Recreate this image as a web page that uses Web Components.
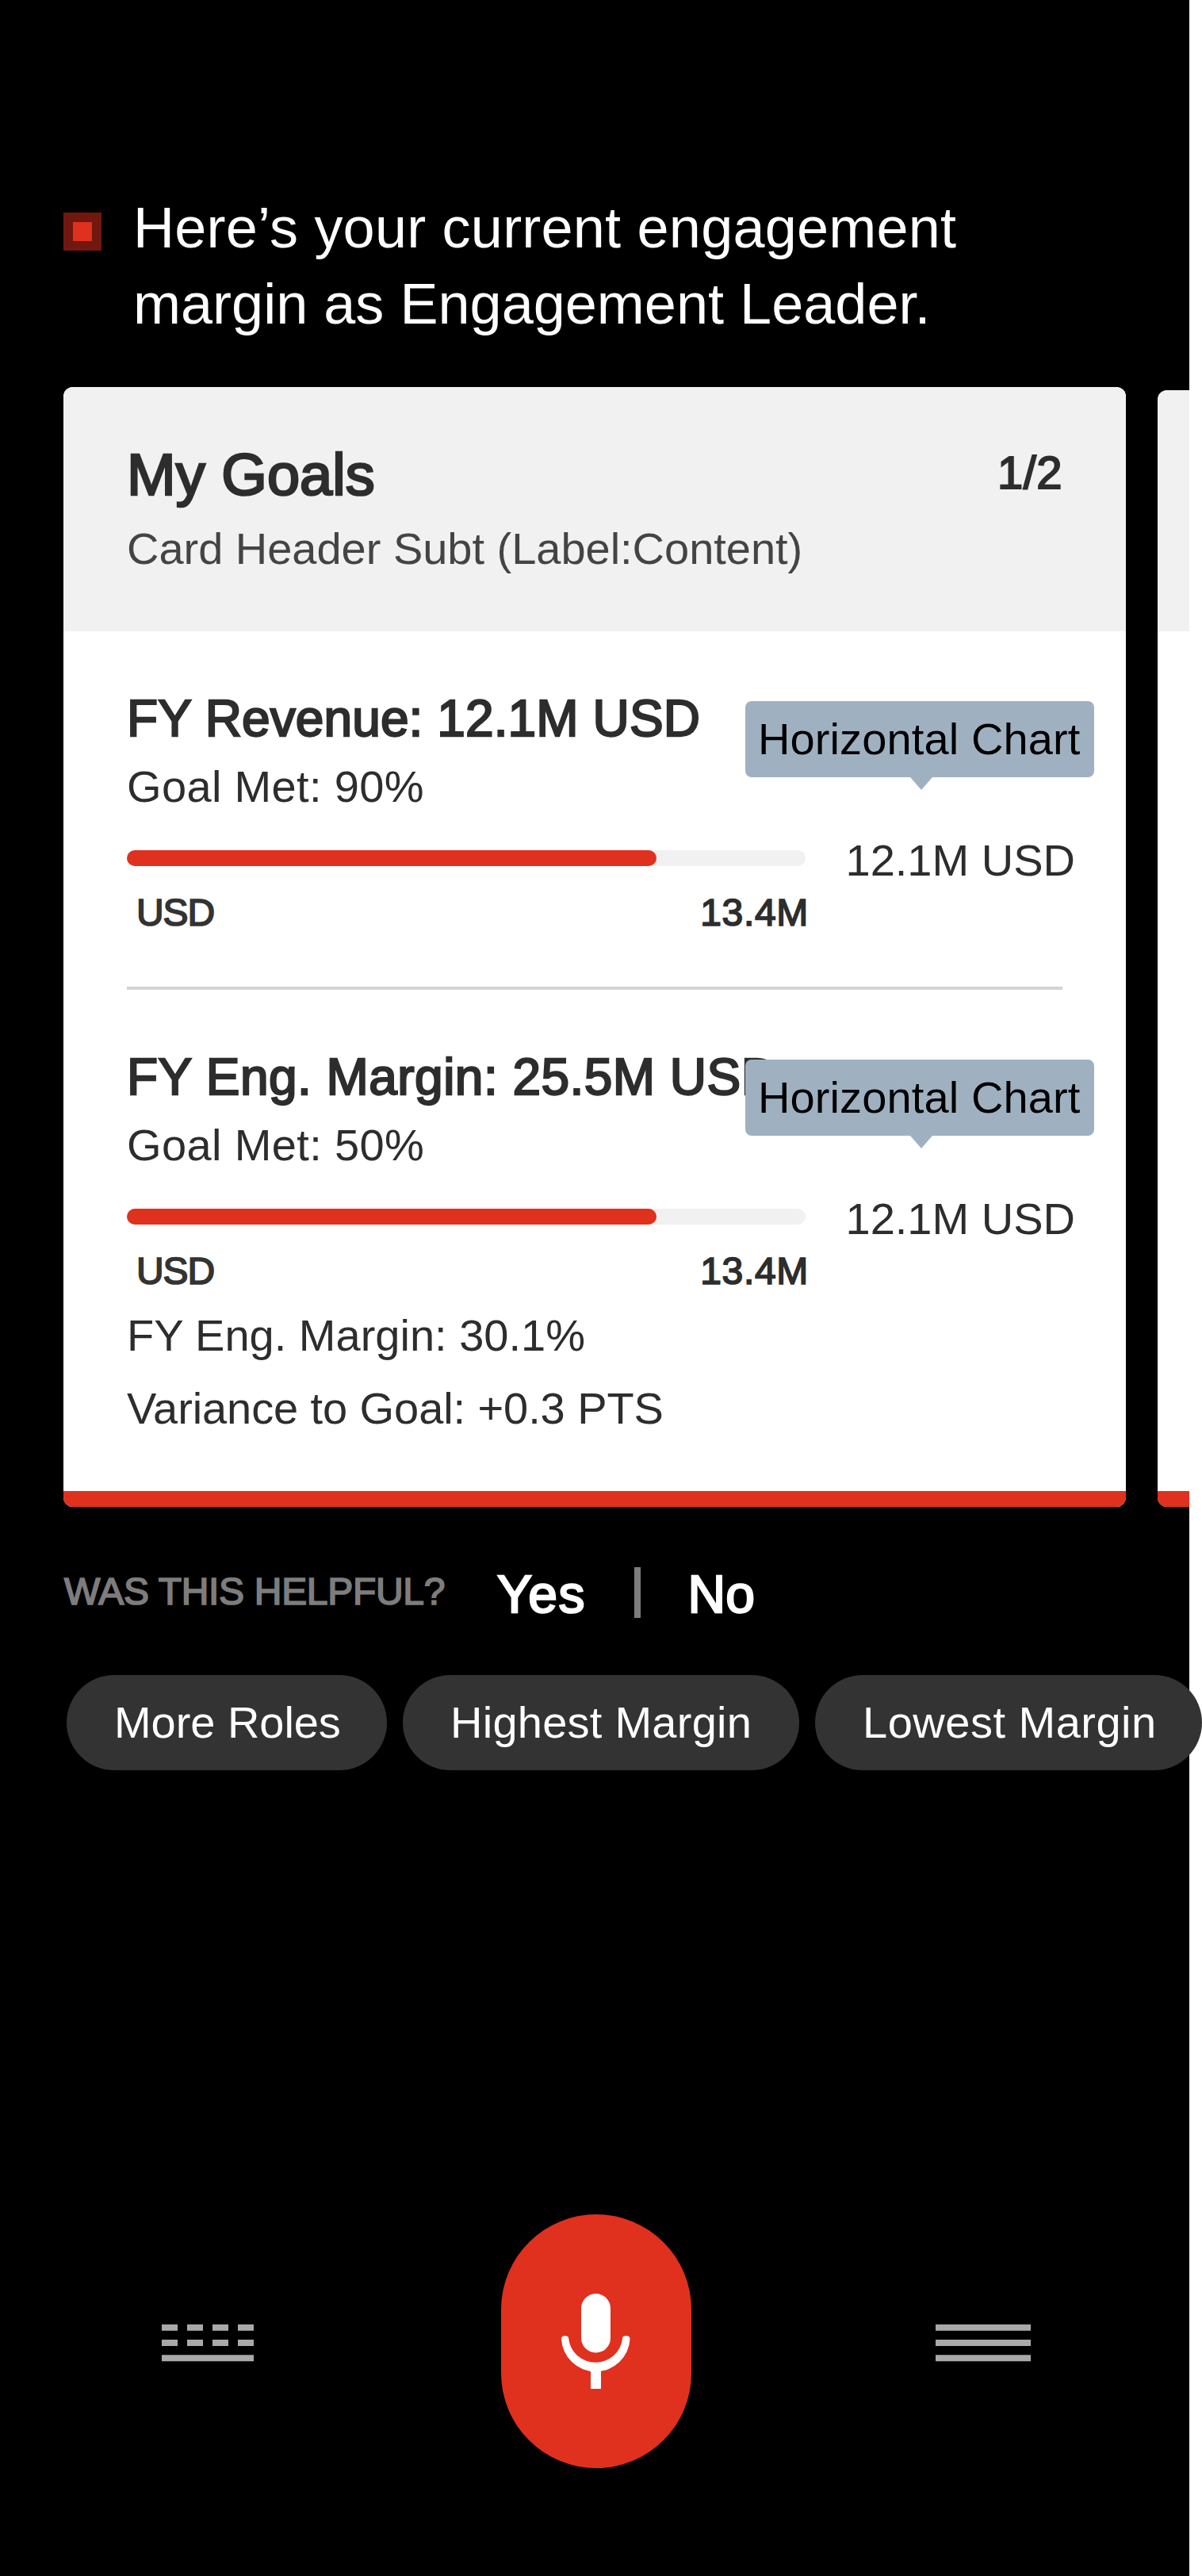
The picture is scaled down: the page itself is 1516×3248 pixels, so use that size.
<!DOCTYPE html>
<html lang="en">
<head>
<meta charset="utf-8">
<title>Engagement margin</title>
<style>
  body { margin: 0; background: #fff; font-family: "Liberation Sans", Arial, sans-serif; }
</style>
</head>
<body>
<app-screen>
  <assistant-prompt>
    <ui-text style="--size:72px;--line:96px;--track:.233px">Here’s your current engagement</ui-text>
    <ui-text style="--size:72px;--line:96px;--track:.031px">margin as Engagement Leader.</ui-text>
  </assistant-prompt>

  <card-carousel>
    <goal-card>
      <ui-text medium slot="title" style="--size:74px;--line:96px;--track:.03px">My Goals</ui-text>
      <ui-text slot="subtitle" style="--track:-.022px;color:#444">Card Header Subt (Label:Content)</ui-text>
      <ui-text medium slot="count" style="--size:58px;--track:.45px">1/2</ui-text>

      <goal-metric>
        <ui-text medium slot="heading" style="--size:64px;--line:80px;--track:.1px">FY Revenue: 12.1M USD</ui-text>
        <ui-text slot="status" style="--track:.35px">Goal Met: 90%</ui-text>
        <ui-text medium slot="min" style="--size:48px;--line:64px;--track:-1.1px;color:#333">USD</ui-text>
        <ui-text medium slot="max" style="--size:48px;--line:64px;--track:.68px">13.4M</ui-text>
        <ui-text slot="value" style="--track:0">12.1M USD</ui-text>
        <tool-tip slot="tip"><ui-text style="--track:.11px;color:#000">Horizontal Chart</ui-text></tool-tip>
      </goal-metric>

      <card-divider></card-divider>

      <goal-metric>
        <ui-text medium slot="heading" style="--size:64px;--line:80px;--track:.46px">FY Eng. Margin: 25.5M USD</ui-text>
        <ui-text slot="status" style="--track:.366px">Goal Met: 50%</ui-text>
        <ui-text medium slot="min" style="--size:48px;--line:64px;--track:-1.1px;color:#333">USD</ui-text>
        <ui-text medium slot="max" style="--size:48px;--line:64px;--track:.68px">13.4M</ui-text>
        <ui-text slot="value" style="--track:0">12.1M USD</ui-text>
        <tool-tip slot="tip"><ui-text style="--track:.11px;color:#000">Horizontal Chart</ui-text></tool-tip>
      </goal-metric>

      <card-notes>
        <ui-text style="--track:0">FY Eng. Margin: 30.1%</ui-text>
        <ui-text style="--track:-.09px">Variance to Goal: +0.3 PTS</ui-text>
      </card-notes>
    </goal-card>
    <goal-card peek></goal-card>
  </card-carousel>

  <feedback-bar>
    <ui-text medium slot="question" style="--size:48px;--line:64px;--track:-.32px">WAS THIS HELPFUL?</ui-text>
    <ui-text medium slot="yes" style="--size:66px;--line:80px;--track:1.4px">Yes</ui-text>
    <ui-text medium slot="no" style="--size:66px;--line:80px;--track:.2px">No</ui-text>
  </feedback-bar>

  <chip-row>
    <chip-button style="width:404px"><ui-text style="--track:-.05px">More Roles</ui-text></chip-button>
    <chip-button style="width:500px"><ui-text style="--track:.25px">Highest Margin</ui-text></chip-button>
    <chip-button style="width:488px"><ui-text style="--track:.5px">Lowest Margin</ui-text></chip-button>
  </chip-row>

  <voice-dock></voice-dock>
</app-screen>

<script>
const define = (name, html) => {
  const template = document.createElement('template');
  template.innerHTML = html;
  customElements.define(name, class extends HTMLElement {
    constructor() {
      super();
      this.attachShadow({ mode: 'open' }).append(template.content.cloneNode(true));
    }
  });
};

define('app-screen', `
  <style>
    :host { display: flex; flex-direction: column; box-sizing: border-box; width: 1500px; height: 3248px;
            padding-top: 239px; background: #000; color: #fff; }
  </style>
  <slot></slot>`);

define('ui-text', `
  <style>
    :host { display: block; white-space: nowrap; font-size: var(--size, 56px);
            line-height: var(--line, 72px); letter-spacing: var(--track, 0); }
    :host([medium]) { -webkit-text-stroke: .036em currentColor; }
  </style>
  <slot></slot>`);

define('assistant-prompt', `
  <style>
    :host { display: flex; gap: 40px; padding-left: 80px; }
    .mark { box-sizing: border-box; width: 48px; height: 48px; margin-top: 29px;
            border: 12px solid #701810; background: #e0301e; }
  </style>
  <div class="mark"></div>
  <div><slot></slot></div>`);

define('card-carousel', `
  <style>
    :host { display: flex; align-items: flex-end; gap: 40px; margin-top: 57px; padding-left: 80px; overflow: hidden; }
  </style>
  <slot></slot>`);

define('goal-card', `
  <style>
    :host { display: flex; flex-direction: column; flex: none; width: 1340px; height: 1412px;
            border-radius: 12px; overflow: hidden; background: #fff; color: #2d2d2d; }
    :host([peek]) { height: 1408px; }
    header { display: flex; justify-content: space-between; box-sizing: border-box; flex: none;
             height: 308px; padding: 63px 80px 0; background: #f1f1f1; }
    :host([peek]) header { height: 304px; }
    .titles { display: flex; flex-direction: column; gap: 9px; }
    .count { margin-top: 9px; }
    main { flex: 1; padding: 70px 80px 0; }
    footer { height: 20px; background: #e0301e; }
  </style>
  <header>
    <div class="titles"><slot name="title"></slot><slot name="subtitle"></slot></div>
    <div class="count"><slot name="count"></slot></div>
  </header>
  <main><slot></slot></main>
  <footer></footer>`);

define('goal-metric', `
  <style>
    :host { display: block; position: relative; }
    .status { margin-top: 10px; }
    .chart { display: flex; gap: 50.5px; margin-top: 21px; }
    .scale { flex: none; width: 856px; padding-top: 23px; }
    .track { height: 20px; border-radius: 10px; background: #f1f1f1; }
    .fill { width: 668px; height: 20px; border-radius: 10px; background: #e0301e; }
    .labels { display: flex; justify-content: space-between; margin: 27px -4px 0 12px; }
    .tip { position: absolute; left: 780px; top: 18px; }
  </style>
  <slot name="heading"></slot>
  <div class="status"><slot name="status"></slot></div>
  <div class="chart">
    <div class="scale">
      <div class="track"><div class="fill"></div></div>
      <div class="labels"><slot name="min"></slot><slot name="max"></slot></div>
    </div>
    <slot name="value"></slot>
  </div>
  <div class="tip"><slot name="tip"></slot></div>`);

define('tool-tip', `
  <style>
    :host { display: block; width: 440px; }
    .bubble { box-sizing: border-box; height: 96px; padding: 12px 16px; border-radius: 8px; background: #9fb1c1; }
    svg { display: block; margin-left: 208px; }
  </style>
  <div class="bubble"><slot></slot></div>
  <svg width="28" height="16" viewBox="0 0 28 16"><path d="M0 0H28L14 16Z" fill="#9fb1c1"/></svg>`);

define('card-divider', `
  <style>:host { display: block; height: 4px; margin: 61px 0 70px; background: #d4d4d4; }</style>`);

define('card-notes', `
  <style>:host { display: flex; flex-direction: column; gap: 20px; margin-top: 13px; }</style>
  <slot></slot>`);

define('feedback-bar', `
  <style>
    :host { display: flex; align-items: flex-start; height: 80px; margin-top: 70px; padding-left: 81px; }
    .question { width: 546px; padding-top: 5px; color: #7d7d7d; }
    .yes { width: 173px; }
    .rule { width: 8px; height: 64px; margin: 6px 59.5px 0 0; background: #7d7d7d; }
  </style>
  <div class="question"><slot name="question"></slot></div>
  <div class="yes"><slot name="yes"></slot></div>
  <div class="rule"></div>
  <slot name="no"></slot>`);

define('chip-row', `
  <style>:host { display: flex; gap: 20px; margin-top: 62px; padding-left: 84px; }</style>
  <slot></slot>`);

define('chip-button', `
  <style>
    :host { display: flex; align-items: center; flex: none; box-sizing: border-box; height: 120px;
            padding-left: 60px; border-radius: 60px; background: #333; color: #fff; }
  </style>
  <slot></slot>`);

define('voice-dock', `
  <style>
    :host { display: flex; align-items: center; margin-top: 560px; padding-left: 204px; }
    .mic { flex: none; width: 240px; height: 320px; margin: 0 308px 0 312px;
           border-radius: 120px; background: #e0301e; }
    svg { display: block; flex: none; }
  </style>
  <svg width="116" height="52" viewBox="0 0 116 52" fill="#a9a9a9">
    <path d="M0 4.67h20v8H0zM32 4.67h20v8H32zM64 4.67h20v8H64zM96 4.67h20v8H96z"/>
    <path d="M0 24h20v8H0zM32 24h20v8H32zM64 24h20v8H64zM96 24h20v8H96z"/>
    <path d="M0 43.33h116v8H0z"/>
  </svg>
  <div class="mic">
    <svg width="240" height="320" viewBox="0 0 240 320" fill="#fff">
      <rect x="101" y="100" width="37" height="74.5" rx="18.5"/>
      <path d="M76 157.3a4 4 0 0 1 4-4h1.3a4 4 0 0 1 4 4a34 33 0 0 0 67.6 0a4 4 0 0 1 4-4h1.6a4 4 0 0 1 4 4a43.3 43 0 0 1-86.5 0z"/>
      <path d="M113 197h13v23h-13z"/>
    </svg>
  </div>
  <svg width="120" height="52" viewBox="0 0 120 52" fill="#a9a9a9">
    <path d="M0 4.67h120v8H0zM0 24h120v8H0zM0 43.33h120v8H0z"/>
  </svg>`);
</script>
</body>
</html>
